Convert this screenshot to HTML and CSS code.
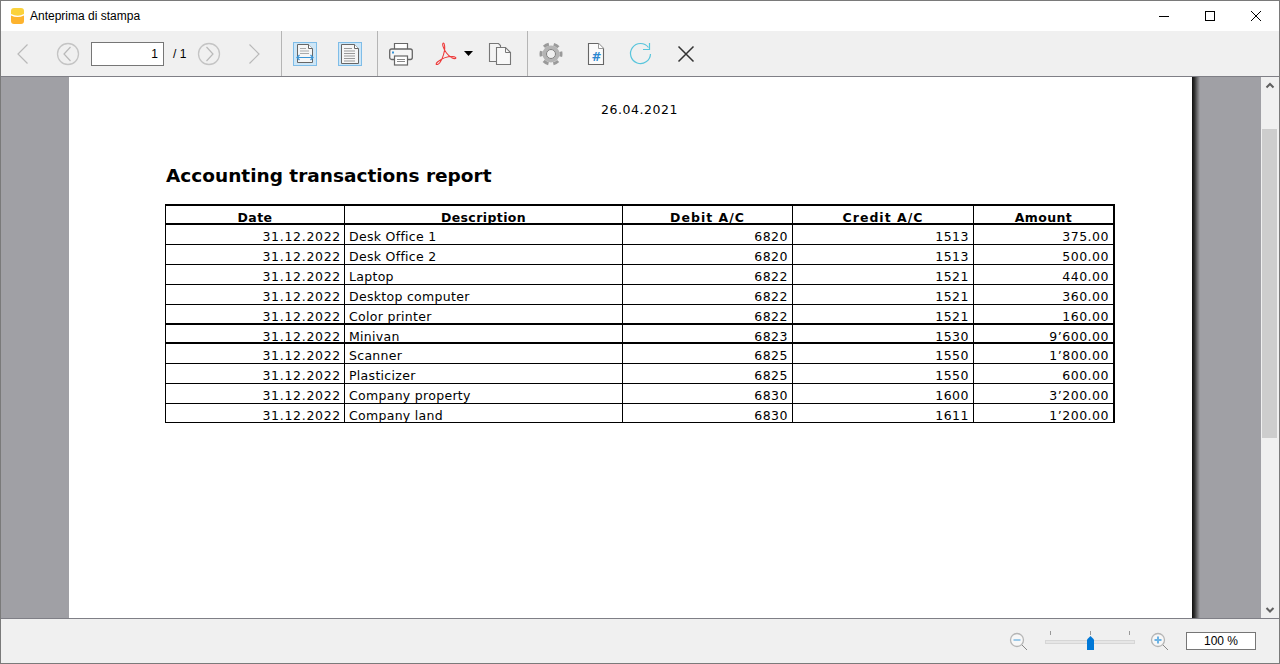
FILE: index.html
```html
<!DOCTYPE html>
<html lang="it">
<head>
<meta charset="utf-8">
<title>Anteprima di stampa</title>
<link rel="stylesheet" href="styles.css">
</head>
<body>
<div class="window">
  <header class="titlebar">
    <svg class="app-icon" width="13" height="16" viewBox="0 0 13 16"><path d="M0 3q0-3 3-3h7q3 0 3 3v3q-6 3.500-13 0z" fill="#fbd23c"/><path d="M0 7.500q6.500 3 13 0V13q0 3-3 3H3q-3 0-3-3z" fill="#fdb32e"/></svg>
    <span class="title">Anteprima di stampa</span>
    <div class="winctl">
      <svg width="46" height="31" viewBox="0 0 46 31"><path d="M18 15.500h10" stroke="#000" fill="none"/></svg>
      <svg width="46" height="31" viewBox="0 0 46 31"><rect x="18.500" y="10.500" width="9" height="9" stroke="#000" fill="none"/></svg>
      <svg width="46" height="31" viewBox="0 0 46 31"><path d="M18 10l10 10M28 10l-10 10" stroke="#000" fill="none"/></svg>
    </div>
  </header>
  <nav class="toolbar">
    <svg class="ic i-first" width="14" height="22" viewBox="0 0 14 22"><path d="M11.500 1.500L2 11l9.500 9.500" stroke="#b9b9b9" stroke-width="1.200" fill="none"/></svg>
    <svg class="ic i-prev" width="24" height="24" viewBox="0 0 24 24"><circle cx="12" cy="12" r="10.500" stroke="#c4c4c4" stroke-width="1.300" fill="none"/><path d="M14.500 5L8 12l6.500 7" stroke="#b9b9b9" stroke-width="1.200" fill="none"/></svg>
    <div class="pagebox">1</div>
    <span class="pagetotal">/ 1</span>
    <svg class="ic i-next" width="24" height="24" viewBox="0 0 24 24"><circle cx="12" cy="12" r="10.500" stroke="#c4c4c4" stroke-width="1.300" fill="none"/><path d="M9.500 5L16 12l-6.500 7" stroke="#b9b9b9" stroke-width="1.200" fill="none"/></svg>
    <svg class="ic i-last" width="14" height="22" viewBox="0 0 14 22"><path d="M2.500 1.500L12 11l-9.500 9.500" stroke="#b9b9b9" stroke-width="1.200" fill="none"/></svg>
    <span class="sep s1"></span>
    <svg class="ic i-fitw" width="24" height="24" viewBox="0 0 24 24"><rect x="0.500" y="0.500" width="23" height="23" fill="#cde6f7" stroke="#7fbde8"/><path d="M4.500 2.500h11l4 4v14h-15z" fill="#f6f6f6" stroke="#666"/><path d="M15.500 2.500v4h4" fill="#fff" stroke="#666"/><path d="M7 6.500h6M7 9h9M7 11.500h9" stroke="#aaa"/><path d="M4 15.500h16M6.500 13l-2.500 2.500 2.500 2.500M17.500 13l2.500 2.500-2.500 2.500" stroke="#3a94d6" stroke-width="1.200" fill="none"/></svg>
    <svg class="ic i-fitp" width="24" height="24" viewBox="0 0 24 24"><rect x="0.500" y="0.500" width="23" height="23" fill="#cde6f7" stroke="#7fbde8"/><path d="M3.500 2.500h13l4 4v15h-17z" fill="#f6f6f6" stroke="#666"/><path d="M16.500 2.500v4h4" fill="#fff" stroke="#666"/><path d="M6 6.500h8M6 9h11M6 11.500h11M6 14h11M6 16.500h11M6 19h11" stroke="#999"/></svg>
    <span class="sep s2"></span>
    <svg class="ic i-print" width="24" height="24" viewBox="0 0 24 24"><path d="M5.500 7V1.500h13V7" fill="#fff" stroke="#666" stroke-width="1.200"/><rect x="0.700" y="7" width="22.600" height="10.500" rx="2" fill="#f6f6f6" stroke="#666" stroke-width="1.300"/><rect x="3" y="9.500" width="2" height="2" fill="#3a94d6"/><rect x="5.500" y="14" width="13" height="9" fill="#fff" stroke="#666" stroke-width="1.200"/><path d="M8 17.500h8M8 19.500h8" stroke="#888"/></svg>
    <svg class="ic i-pdf" width="22" height="23" viewBox="0 0 22 23"><path d="M8.500 1c-2 .500 0 6 3 10s7 6 9 5.500c1-.500 0-2-3-2-5 0-11 2-15 5.500-2 2-1.500 3 0 2.500 3-1 6-8 7-14 .500-3 0-7.500-1-7.500z" fill="none" stroke="#ee3a3a" stroke-width="1.100"/></svg>
    <svg class="ic i-caret" width="9" height="5" viewBox="0 0 9 5"><path d="M0 0h9L4.500 5z" fill="#000"/></svg>
    <svg class="ic i-copy" width="24" height="24" viewBox="0 0 24 24"><path d="M1.500 1.500h9l2 2v16h-11z" fill="#f4f4f4" stroke="#777" stroke-width="1.100"/><path d="M8.500 5.500h9l5 5v12h-14z" fill="#f8f8f8" stroke="#777" stroke-width="1.100"/><path d="M17.500 5.500v5h5" fill="none" stroke="#777"/></svg>
    <span class="sep s3"></span>
    <svg class="ic i-gear" width="24" height="24" viewBox="0 0 24 24"><circle cx="12" cy="12" r="10" fill="none" stroke="#9a9a9a" stroke-width="3" stroke-dasharray="5.500 4.970" stroke-dashoffset="2.750"/><circle cx="12" cy="12" r="6.500" fill="none" stroke="#b4b4b4" stroke-width="4"/><circle cx="12" cy="12" r="4.500" fill="#f0f0f0" stroke="#808080" stroke-width="1"/></svg>
    <svg class="ic i-num" width="18" height="24" viewBox="0 0 18 24"><path d="M1.500 1.500h10l5 5v16h-15z" fill="#fbfbfb" stroke="#666" stroke-width="1.100"/><path d="M11.500 1.500v5h5" fill="#fff" stroke="#999"/><text class="hash" x="9.500" y="19">#</text></svg>
    <svg class="ic i-redo" width="24" height="24" viewBox="0 0 24 24"><path d="M20.500 5.500A10 10 0 1 0 22.500 12" fill="none" stroke="#58c5dc" stroke-width="1.200"/><path d="M21.500 1v6.500H15" fill="none" stroke="#58c5dc" stroke-width="1.200"/></svg>
    <svg class="ic i-close" width="18" height="18" viewBox="0 0 18 18"><path d="M1.500 1.500l15 15M16.500 1.500l-15 15" stroke="#333" stroke-width="1.500"/></svg>
  </nav>
  <main class="viewer">
    <div class="canvas">
      <article class="page">
        <div class="date">26.04.2021</div>
        <h1 class="report">Accounting transactions report</h1>
        <table class="tx">
          <colgroup><col class="c1"><col class="c2"><col class="c3"><col class="c4"><col class="c5"></colgroup>
          <thead><tr><th>Date</th><th>Description</th><th class="ac">Debit A/C</th><th class="ac">Credit A/C</th><th>Amount</th></tr></thead>
          <tbody>
            <tr class="first"><td class="d">31.12.2022</td><td class="l">Desk Office 1</td><td>6820</td><td>1513</td><td>375.00</td></tr>
            <tr><td class="d">31.12.2022</td><td class="l">Desk Office 2</td><td>6820</td><td>1513</td><td>500.00</td></tr>
            <tr><td class="d">31.12.2022</td><td class="l">Laptop</td><td>6822</td><td>1521</td><td>440.00</td></tr>
            <tr><td class="d">31.12.2022</td><td class="l">Desktop computer</td><td>6822</td><td>1521</td><td>360.00</td></tr>
            <tr class="short"><td class="d">31.12.2022</td><td class="l">Color printer</td><td>6822</td><td>1521</td><td>160.00</td></tr>
            <tr class="heavy"><td class="d">31.12.2022</td><td class="l">Minivan</td><td>6823</td><td>1530</td><td>9’600.00</td></tr>
            <tr class="heavy tall"><td class="d">31.12.2022</td><td class="l">Scanner</td><td>6825</td><td>1550</td><td>1’800.00</td></tr>
            <tr><td class="d">31.12.2022</td><td class="l">Plasticizer</td><td>6825</td><td>1550</td><td>600.00</td></tr>
            <tr><td class="d">31.12.2022</td><td class="l">Company property</td><td>6830</td><td>1600</td><td>3’200.00</td></tr>
            <tr class="last"><td class="d">31.12.2022</td><td class="l">Company land</td><td>6830</td><td>1611</td><td>1’200.00</td></tr>
          </tbody>
        </table>
      </article>
      <div class="shade"></div>
    </div>
    <aside class="scrollbar">
      <svg class="arrow" width="18" height="17" viewBox="0 0 18 17"><path d="M5.500 10.500l3.500-3.500 3.500 3.500" stroke="#606060" stroke-width="2" fill="none"/></svg>
      <div class="track"><div class="thumb"></div></div>
      <svg class="arrow" width="18" height="17" viewBox="0 0 18 17"><path d="M5.500 7l3.500 3.500L12.500 7" stroke="#606060" stroke-width="2" fill="none"/></svg>
    </aside>
  </main>
  <footer class="statusbar">
    <svg width="20" height="20" viewBox="0 0 20 20"><circle cx="8" cy="8" r="6.500" fill="#f7f7f7" stroke="#b5b5b5" stroke-width="1.300"/><path d="M4.500 8h7" stroke="#9cc9e8" stroke-width="2"/><path d="M13 13l5 5" stroke="#888"/></svg>
    <div class="slider"><span class="tick t1"></span><span class="tick t2"></span><span class="tick t3"></span><span class="groove"></span><svg class="knob" width="7" height="14" viewBox="0 0 7 14"><path d="M3.500 0L7 3.500V14H0V3.500z" fill="#0078d7"/></svg></div>
    <svg width="20" height="20" viewBox="0 0 20 20"><circle cx="8" cy="8" r="6.500" fill="#f7f7f7" stroke="#b5b5b5" stroke-width="1.300"/><path d="M4.500 8h7M8 4.500v7" stroke="#6cb2e3" stroke-width="2"/><path d="M13 13l5 5" stroke="#888"/></svg>
    <div class="zoombox">100 %</div>
  </footer>
</div>
</body>
</html>
```
FILE: styles.css
```css
* { box-sizing: border-box; }
html, body { margin: 0; padding: 0; height: 100%; overflow: hidden; }
body { font-family: "Liberation Sans", Arial, sans-serif; background: #fff; }
.window { width: 1280px; height: 664px; display: flex; flex-direction: column; border: 1px solid #7a7a7a; }

.titlebar { height: 30px; flex: none; background: #fff; display: flex; align-items: center; padding-left: 10px; }
.app-icon { flex: none; margin-top: -1px; }
.title { font-size: 12px; color: #000; margin-left: 6px; }
.winctl { margin-left: auto; display: flex; }
.winctl svg { display: block; }

.toolbar { height: 46px; flex: none; background: #f0f0f0; border-bottom: 1px solid #7f7f86; display: flex; align-items: center; }
.ic { flex: none; display: block; }
.i-first { margin-left: 15px; }
.i-prev { margin-left: 26px; }
.pagebox { width: 73px; height: 24px; margin-left: 11px; border: 1px solid #767676; background: #fff; font-size: 12px; line-height: 22px; text-align: right; padding-right: 5px; color: #000; flex: none; }
.pagetotal { font-size: 12px; margin-left: 9px; width: 16px; flex: none; }
.i-next { margin-left: 8px; }
.i-last { margin-left: 26px; }
.sep { width: 1px; height: 45px; background: #b5b5b5; flex: none; }
.s1 { margin-left: 20px; }
.i-fitw { margin-left: 11px; }
.i-fitp { margin-left: 21px; }
.s2 { margin-left: 15px; }
.i-print { margin-left: 11px; }
.i-pdf { margin-left: 22px; }
.i-caret { margin-left: 7px; margin-top: -1px; }
.i-copy { margin-left: 15px; }
.s3 { margin-left: 15px; }
.i-gear { margin-left: 11px; }
.i-num { margin-left: 24px; }
.i-redo { margin-left: 23px; }
.i-close { margin-left: 25px; }
.hash { font-family: "DejaVu Sans", sans-serif; font-size: 12px; font-weight: bold; fill: #2b88d0; text-anchor: middle; }

.viewer { height: 541px; flex: none; display: flex; }
.canvas { flex: 1; display: flex; background: #a0a0a5; padding-left: 68px; overflow: hidden; }
.page { width: 1123px; flex: none; height: 100%; background: #fff; padding: 26px 0 0 96px; font-family: "DejaVu Sans", Verdana, sans-serif; color: #000; }
.shade { width: 8px; flex: none; background: linear-gradient(to right, #0d0d0d, #2e2e2e 30%, #6a6a6c 65%, #a0a0a5); }
.date { width: 949px; text-align: center; font-size: 12.500px; line-height: 14px; letter-spacing: .55px; }
.report { font-size: 18.500px; font-weight: bold; margin: 47px 0 0 1px; line-height: 24px; }

.tx { border-collapse: separate; border-spacing: 0; table-layout: fixed; width: 950px; margin-top: 16px; font-size: 12.500px; border-left: 1px solid #000; border-right: 2px solid #000; }
.c1 { width: 178px; } .c2 { width: 278px; } .c3 { width: 170px; } .c4 { width: 181px; } .c5 { width: 140px; }
.tx th, .tx td { padding: 7px 4px 0 3px; line-height: 10px; vertical-align: top; border-top: 1px solid #000; border-left: 1px solid #000; white-space: nowrap; letter-spacing: .5px; }
.tx th:first-child, .tx td:first-child { border-left: 0; }
.tx th { height: 19px; border-top-width: 2px; font-weight: bold; text-align: center; letter-spacing: .4px; padding-right: 3px; }
.tx th.ac { letter-spacing: 1px; }
.tx td { height: 20px; text-align: right; }
.tx td.d { letter-spacing: .7px; padding-right: 3px; }
.tx td.l { text-align: left; padding-left: 4px; letter-spacing: .3px; }
.tx tr.first td { height: 21px; border-top-width: 2px; }
.tx tr.short td { height: 19px; }
.tx tr.heavy td { height: 19px; border-top-width: 2px; }
.tx tr.tall td { height: 21px; }
.tx tr.last td { border-bottom: 1px solid #000; }

.scrollbar { width: 18px; flex: none; background: #f0f0f0; display: flex; flex-direction: column; }
.arrow { flex: none; display: block; }
.track { flex: 1; padding-top: 35px; padding-left: 1px; }
.thumb { width: 15px; height: 309px; background: #cdcdcd; }

.statusbar { flex: 1; min-height: 0; background: #f0f0f0; border-top: 1px solid #7f7f86; display: flex; align-items: center; padding-left: 1008px; }
.statusbar > svg { flex: none; margin-top: 2px; }
.slider { position: relative; width: 90px; height: 24px; margin-left: 16px; flex: none; }
.groove { position: absolute; left: 0; right: 0; top: 11px; height: 4px; background: #e6e6e6; border: 1px solid #d6d6d6; }
.tick { position: absolute; top: 2px; width: 1px; height: 4px; background: #999; }
.t1 { left: 5px; } .t2 { left: 45px; } .t3 { left: 84px; }
.knob { position: absolute; left: 42px; top: 7px; display: block; }
.statusbar > .slider + svg { margin-left: 15px; }
.zoombox { width: 70px; height: 18px; margin-left: 16px; border: 1px solid #767676; background: #fff; font-size: 12px; line-height: 16px; text-align: center; flex: none; }
```
